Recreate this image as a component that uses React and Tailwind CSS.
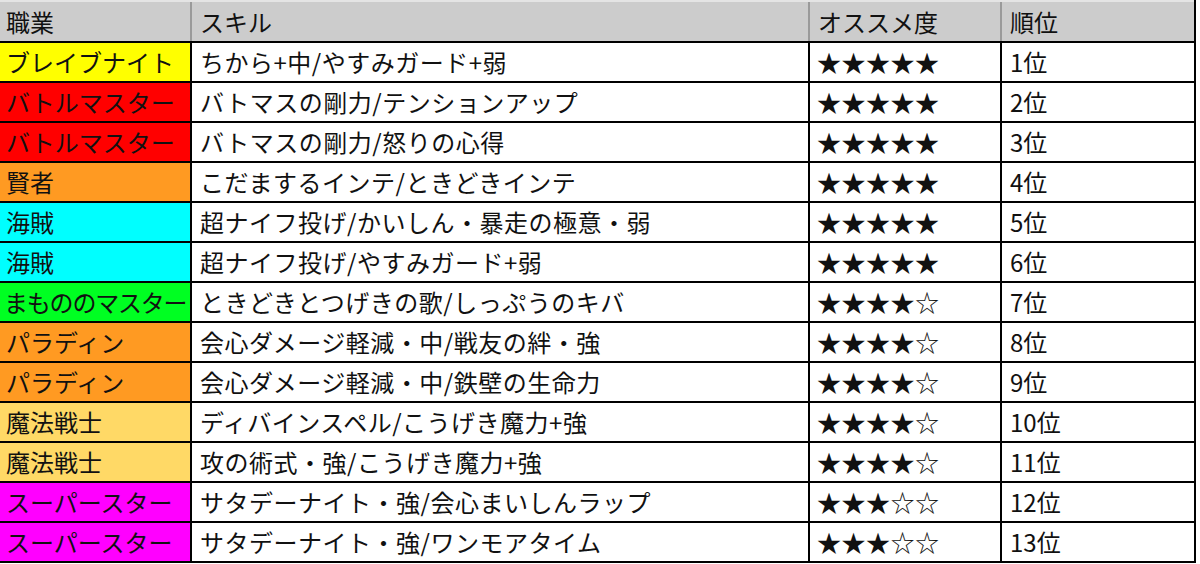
const rows = [
  { job: "ブレイブナイト", color: "bg-[#ffff00]", skill: "ちから+中/やすみガード+弱", stars: 5, rank: "1位" },
  { job: "バトルマスター", color: "bg-[#ff0000]", skill: "バトマスの剛力/テンションアップ", stars: 5, rank: "2位" },
  { job: "バトルマスター", color: "bg-[#ff0000]", skill: "バトマスの剛力/怒りの心得", stars: 5, rank: "3位" },
  { job: "賢者", color: "bg-[#ff9a22]", skill: "こだまするインテ/ときどきインテ", stars: 5, rank: "4位" },
  { job: "海賊", color: "bg-[#00ffff]", skill: "超ナイフ投げ/かいしん・暴走の極意・弱", stars: 5, rank: "5位" },
  { job: "海賊", color: "bg-[#00ffff]", skill: "超ナイフ投げ/やすみガード+弱", stars: 5, rank: "6位" },
  { job: "まもののマスター", color: "bg-[#00ff22]", skill: "ときどきとつげきの歌/しっぷうのキバ", stars: 4, rank: "7位", tight: true },
  { job: "パラディン", color: "bg-[#ff9a22]", skill: "会心ダメージ軽減・中/戦友の絆・強", stars: 4, rank: "8位" },
  { job: "パラディン", color: "bg-[#ff9a22]", skill: "会心ダメージ軽減・中/鉄壁の生命力", stars: 4, rank: "9位" },
  { job: "魔法戦士", color: "bg-[#ffd966]", skill: "ディバインスペル/こうげき魔力+強", stars: 4, rank: "10位" },
  { job: "魔法戦士", color: "bg-[#ffd966]", skill: "攻の術式・強/こうげき魔力+強", stars: 4, rank: "11位" },
  { job: "スーパースター", color: "bg-[#ff00ff]", skill: "サタデーナイト・強/会心まいしんラップ", stars: 3, rank: "12位" },
  { job: "スーパースター", color: "bg-[#ff00ff]", skill: "サタデーナイト・強/ワンモアタイム", stars: 3, rank: "13位" },
];

const font = { fontFamily: '"Noto Sans CJK JP", "Noto Sans", sans-serif' };

export default function App() {
  return (
    <div className="w-[1200px] h-[564px] bg-white overflow-hidden text-[24px] text-[#111] leading-none" style={font}>
      <div className="w-[1196px] border-r-2 border-black">
        {/* header */}
        <div className="flex h-[43px] bg-[#cccccc] border-t-2 border-t-[#e4e4e4] border-b-2 border-b-black">
          <div className="w-[192px] flex items-center pl-[6px] border-r-2 border-[#9a9a9a]">職業</div>
          <div className="w-[618px] flex items-center pl-[8px] border-r-2 border-[#9a9a9a]">スキル</div>
          <div className="w-[192px] flex items-center pl-[8px] border-r-2 border-[#9a9a9a]">オススメ度</div>
          <div className="flex-1 flex items-center pl-[8px]">順位</div>
        </div>
        {rows.map((r, i) => (
          <div key={i} className="flex h-[40px] border-b-2 border-black">
            <div
              className={`w-[192px] flex items-center border-r-2 border-black whitespace-nowrap overflow-hidden ${r.color} ${
                r.tight ? "pl-[4px] tracking-[-1.2px]" : "pl-[6px]"
              }`}
            >
              {r.job}
            </div>
            <div className="w-[618px] flex items-center pl-[8px] border-r-2 border-black whitespace-nowrap tracking-[0.5px]">
              {r.skill}
            </div>
            <div className="w-[192px] flex items-center pl-[7px] border-r-2 border-black tracking-[0.5px]">
              {"★".repeat(r.stars) + "☆".repeat(5 - r.stars)}
            </div>
            <div className="flex-1 flex items-center pl-[8px]">{r.rank}</div>
          </div>
        ))}
      </div>
    </div>
  );
}
